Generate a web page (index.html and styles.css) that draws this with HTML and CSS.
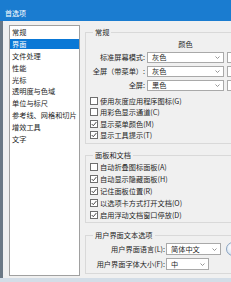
FILE: index.html
```html
<!DOCTYPE html>
<html lang="zh-CN">
<head>
<meta charset="utf-8">
<title>首选项</title>
<link rel="stylesheet" href="styles.css">
</head>
<body>
<div class="screen">
  <div class="titlebar"><span class="title">首选项</span></div>
  <div class="main">
    <div class="edge"></div>
    <div class="client">
      <ul class="nav">
        <li>常规</li>
        <li class="sel">界面</li>
        <li>文件处理</li>
        <li>性能</li>
        <li>光标</li>
        <li>透明度与色域</li>
        <li>单位与标尺</li>
        <li>参考线、网格和切片</li>
        <li>增效工具</li>
        <li>文字</li>
      </ul>
      <div class="panel">
        <section class="group g1">
          <div class="gtitle">常规</div>
          <div class="colhead">颜色</div>
          <div class="colors">
            <div class="lbl">标准屏幕模式:</div>
            <div class="select"><span>灰色</span><svg class="chev" width="5" height="3" viewBox="0 0 5 3"><polyline points="0.5,0.5 2.5,2.5 4.5,0.5" fill="none" stroke="#8a8a8a" stroke-width="0.9"/></svg></div>
            <div class="select"></div>
            <div class="lbl">全屏（带菜单）:</div>
            <div class="select"><span>灰色</span><svg class="chev" width="5" height="3" viewBox="0 0 5 3"><polyline points="0.5,0.5 2.5,2.5 4.5,0.5" fill="none" stroke="#8a8a8a" stroke-width="0.9"/></svg></div>
            <div class="select"></div>
            <div class="lbl">全屏:</div>
            <div class="select"><span>黑色</span><svg class="chev" width="5" height="3" viewBox="0 0 5 3"><polyline points="0.5,0.5 2.5,2.5 4.5,0.5" fill="none" stroke="#8a8a8a" stroke-width="0.9"/></svg></div>
            <div class="select"></div>
          </div>
          <div class="checks c1">
            <div class="check"><span class="box"></span>使用灰度应用程序图标(G)</div>
            <div class="check"><span class="box"></span>用彩色显示通道(C)</div>
            <div class="check"><span class="box"><svg width="6" height="6" viewBox="0 0 6 6"><polyline points="0.7,3 2.3,4.7 5.4,1" fill="none" stroke="#333" stroke-width="0.9"/></svg></span>显示菜单颜色(M)</div>
            <div class="check"><span class="box"><svg width="6" height="6" viewBox="0 0 6 6"><polyline points="0.7,3 2.3,4.7 5.4,1" fill="none" stroke="#333" stroke-width="0.9"/></svg></span>显示工具提示(T)</div>
          </div>
        </section>
        <section class="group g2">
          <div class="gtitle">面板和文档</div>
          <div class="checks c2">
            <div class="check"><span class="box"></span>自动折叠图标面板(A)</div>
            <div class="check"><span class="box"><svg width="6" height="6" viewBox="0 0 6 6"><polyline points="0.7,3 2.3,4.7 5.4,1" fill="none" stroke="#333" stroke-width="0.9"/></svg></span>自动显示隐藏面板(H)</div>
            <div class="check"><span class="box"><svg width="6" height="6" viewBox="0 0 6 6"><polyline points="0.7,3 2.3,4.7 5.4,1" fill="none" stroke="#333" stroke-width="0.9"/></svg></span>记住面板位置(R)</div>
            <div class="check"><span class="box"><svg width="6" height="6" viewBox="0 0 6 6"><polyline points="0.7,3 2.3,4.7 5.4,1" fill="none" stroke="#333" stroke-width="0.9"/></svg></span>以选项卡方式打开文档(O)</div>
            <div class="check"><span class="box"><svg width="6" height="6" viewBox="0 0 6 6"><polyline points="0.7,3 2.3,4.7 5.4,1" fill="none" stroke="#333" stroke-width="0.9"/></svg></span>启用浮动文档窗口停放(D)</div>
          </div>
        </section>
        <section class="group g3">
          <div class="gtitle">用户界面文本选项</div>
          <div class="ui">
            <div class="lbl">用户界面语言(L):</div>
            <div class="select lang"><span>简体中文</span><svg class="chev" width="5" height="3" viewBox="0 0 5 3"><polyline points="0.5,0.5 2.5,2.5 4.5,0.5" fill="none" stroke="#8a8a8a" stroke-width="0.9"/></svg></div>
            <div class="info"></div>
            <div class="lbl">用户界面字体大小(F):</div>
            <div class="select size"><span>中</span><svg class="chev" width="5" height="3" viewBox="0 0 5 3"><polyline points="0.5,0.5 2.5,2.5 4.5,0.5" fill="none" stroke="#8a8a8a" stroke-width="0.9"/></svg></div>
          </div>
        </section>
      </div>
    </div>
  </div>
  <div class="bottom"></div>
</div>
</body>
</html>
```

FILE: styles.css
```css
html, body {
  margin: 0;
  padding: 0;
}

.screen {
  width: 231px;
  height: 282px;
  overflow: hidden;
  background: #f0f0f0;
  font-family: "Noto Sans CJK SC", "Noto Sans", sans-serif;
  font-size: 7.2px;
  color: #1e1e1e;
  display: flex;
  flex-direction: column;
}

.titlebar {
  flex: none;
  height: 21px;
  box-sizing: border-box;
  padding: 4px 0 0 5px;
  background: #1a7cd0;
  color: #fff;
  display: flex;
  align-items: center;
}

.title {
  font-size: 7px;
  line-height: 10px;
}

.main {
  flex: 1;
  min-height: 0;
  display: flex;
}

.edge {
  flex: none;
  width: 3px;
  background: #6b7885;
}

.client {
  flex: 1;
  min-width: 0;
  display: flex;
  padding: 4px 0 0 6px;
  overflow: hidden;
}

.nav {
  flex: none;
  list-style: none;
  margin: 0;
  padding: 1px 0 0;
  width: 71px;
  height: 251px;
  box-sizing: border-box;
  border: 1px solid #a0a0a0;
  background: #fff;
  display: flex;
  flex-direction: column;
  gap: 1.9px;
}

.nav li {
  height: 10px;
  line-height: 10px;
  padding-left: 2px;
  white-space: nowrap;
}

.nav li.sel {
  background: #0a78d6;
  color: #fff;
}

.panel {
  flex: none;
  width: 200px;
  margin-left: 5px;
  display: flex;
  flex-direction: column;
}

.group {
  box-sizing: border-box;
  border: 1px solid #d9d9d9;
  padding: 0 0 0 4px;
}

.g1 {
  margin-top: 7px;
  height: 112px;
}

.g2 {
  margin-top: 11px;
  height: 68px;
}

.g3 {
  margin-top: 12px;
  height: 39px;
}

.gtitle {
  width: fit-content;
  margin: -6px 0 0 3px;
  padding: 0 2px;
  background: #f0f0f0;
  line-height: 10px;
  white-space: nowrap;
}

.colhead {
  margin: 2px 0 0 57px;
  width: 77px;
  text-align: center;
  line-height: 10px;
}

.colors {
  display: grid;
  grid-template-columns: 57px 80px 77px;
  grid-auto-rows: 11px;
  row-gap: 3px;
  margin-top: 3px;
  align-items: center;
}

.lbl {
  text-align: right;
  padding-right: 2px;
  line-height: 11px;
  white-space: nowrap;
}

.select {
  box-sizing: border-box;
  width: 77px;
  height: 11px;
  border: 1px solid #a9a9a9;
  background: #fff;
  display: flex;
  align-items: center;
  justify-content: space-between;
  padding: 0 3px 0 4px;
  line-height: 9px;
  white-space: nowrap;
}

.chev {
  flex: none;
  display: block;
}

.checks {
  display: flex;
  flex-direction: column;
}

.c1 {
  margin-top: 4px;
}

.c2 {
  margin-top: 1px;
}

.check {
  display: flex;
  align-items: center;
  height: 11.5px;
  white-space: nowrap;
}

.c2 .check {
  height: 12px;
}

.box {
  flex: none;
  width: 8px;
  height: 8px;
  box-sizing: border-box;
  border: 1px solid #6e6e6e;
  background: #fff;
  margin-right: 2px;
  display: flex;
  align-items: center;
  justify-content: center;
}

.box svg {
  display: block;
}

.ui {
  display: grid;
  grid-template-columns: 76px auto auto;
  grid-auto-rows: 12px;
  row-gap: 3px;
  margin-top: 3px;
  align-items: center;
  justify-content: start;
}

.ui .lbl {
  padding-right: 1px;
}

.ui .select {
  height: 12px;
}

.lang {
  width: 55px;
}

.size {
  width: 43px;
}

.info {
  width: 14px;
  height: 14px;
  margin-left: 5px;
  box-sizing: border-box;
  border-radius: 50%;
  border: 1px solid #8aa3c0;
  background: radial-gradient(circle at 40% 35%, #ffffff 0%, #dfe9f4 55%, #a9bfd8 100%);
}

.bottom {
  flex: none;
  height: 4px;
  background: #d3dde7;
}
```
